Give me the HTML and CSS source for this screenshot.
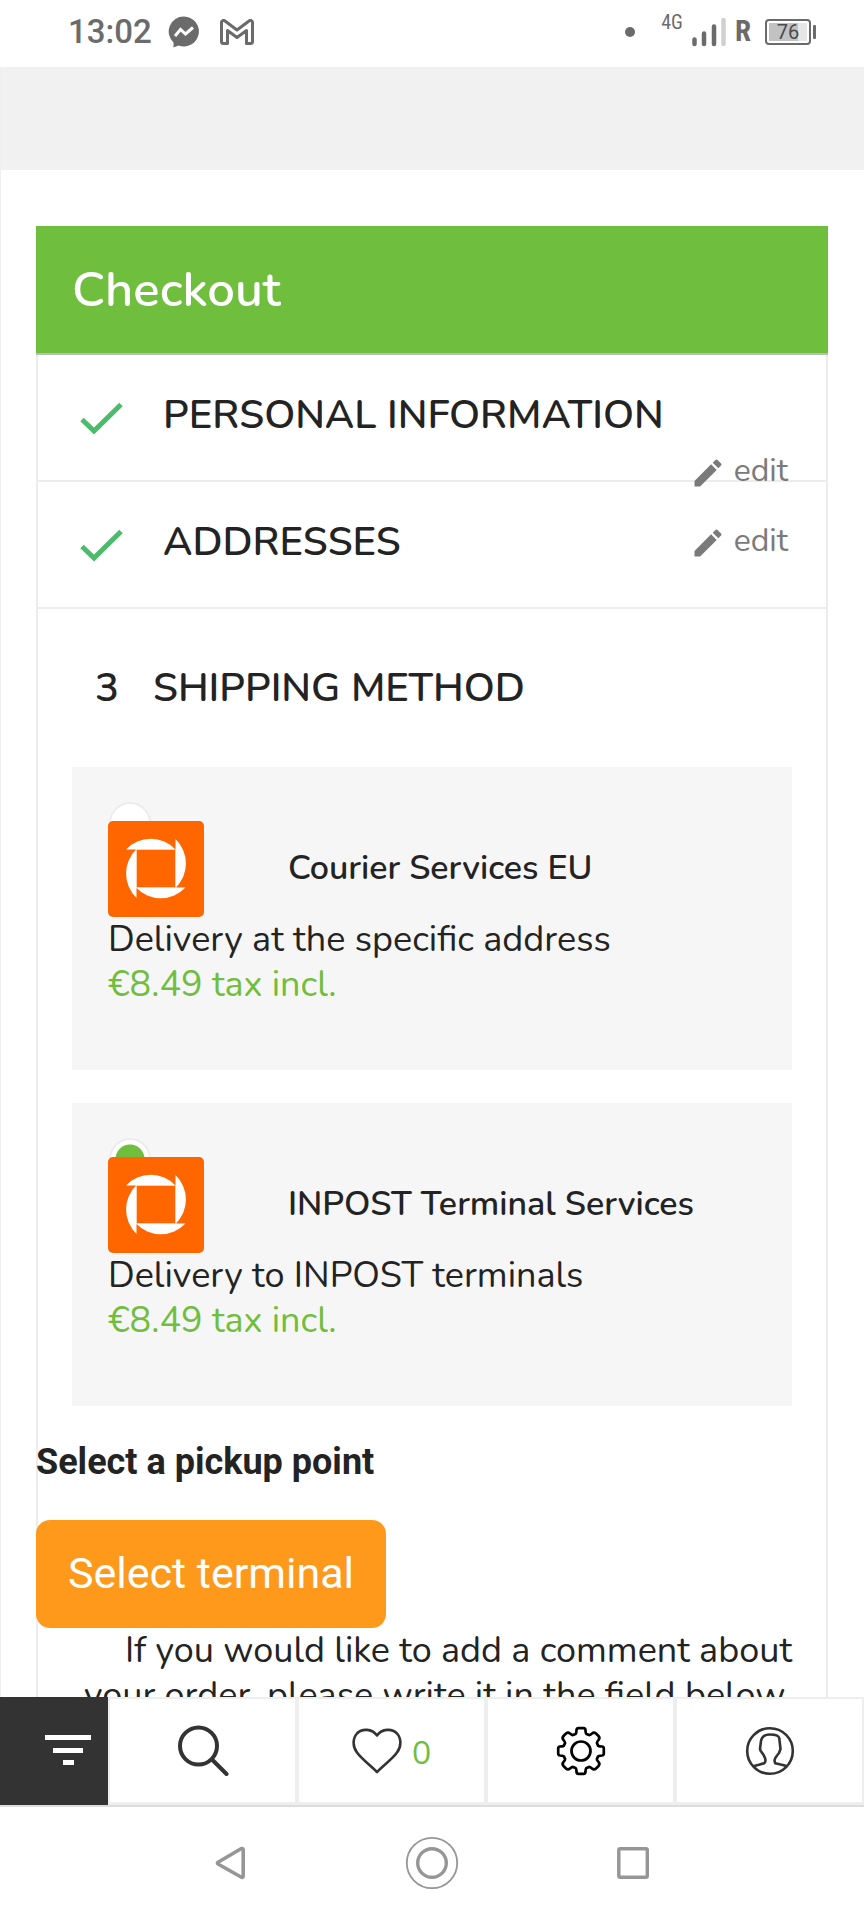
FILE: index.html
```html
<!DOCTYPE html>
<html lang="en">
<head>
<meta charset="utf-8">
<meta name="viewport" content="width=device-width, initial-scale=1">
<title>Checkout</title>
<link rel="stylesheet" href="styles.css">
</head>
<body>
<div class="screen">
  <header class="status">
    <time class="status-time">13:02</time>
    <svg class="status-icon" width="32" height="32" viewBox="0 0 32 32" aria-label="Messenger"><path fill="#6b6b6b" d="M16 0.500a15 15 0 1 1-5.500 29L5.500 31.500V26.500A15 15 0 0 1 16 .500Z"/><path fill="none" stroke="#fff" stroke-width="3" d="M7 20l5.500-6.500 5 4.500 7.500-6.500"/></svg>
    <svg class="status-icon mail" width="34" height="26" viewBox="0 0 34 26" aria-label="Mail"><path fill="none" stroke="#6b6b6b" stroke-width="3" stroke-linejoin="round" d="M1.500 3.500C1.500 1.500 3.500 .800 5 2L17 11 29 2c1.500-1.200 3.500-.500 3.500 1.500V22.500a2 2 0 0 1-2 2H26.500V11.500L17 18.500 7.500 11.500V24.500H3.500a2 2 0 0 1-2-2Z"/></svg>
    <span class="spacer"></span>
    <span class="dot"></span>
    <span class="net">4G</span>
    <svg class="signal" width="34" height="30" viewBox="0 0 34 30" aria-label="Signal"><g stroke="#6b6b6b" stroke-width="4.500" stroke-linecap="round"><path d="M2.500 22.500v4.500M12 16.500v10.500M22 9.500v17.500"/><path stroke="#d0d0d0" d="M31.500 3v24"/></g></svg>
    <span class="roam">R</span>
    <span class="battery"><span class="battery-level">76</span></span><span class="battery-tip"></span>
  </header>

  <main class="page">
    <div class="band"></div>
    <section class="checkout">
      <h1 class="checkout-title">Checkout</h1>
      <div class="checkout-body">
        <div class="step">
          <svg class="check" width="44" height="34" viewBox="0 0 44 34"><path fill="none" stroke="#4cbb6c" stroke-width="5" d="M2 17.500 14 29 41 2.500"/></svg>
          <h2 class="step-title">PERSONAL INFORMATION</h2>
          <a class="edit" href="#personal"><svg width="36" height="36" viewBox="0 0 24 24"><path fill="#7a7a7a" d="M3 17.250V21h3.750L17.810 9.940l-3.750-3.750L3 17.250zM20.710 7.040a1 1 0 0 0 0-1.410l-2.340-2.340a1 1 0 0 0-1.410 0l-1.830 1.830 3.750 3.750 1.830-1.830z"/></svg>edit</a>
        </div>
        <div class="step">
          <svg class="check" width="44" height="34" viewBox="0 0 44 34"><path fill="none" stroke="#4cbb6c" stroke-width="5" d="M2 17.500 14 29 41 2.500"/></svg>
          <h2 class="step-title">ADDRESSES</h2>
          <a class="edit" href="#addresses"><svg width="36" height="36" viewBox="0 0 24 24"><path fill="#7a7a7a" d="M3 17.250V21h3.750L17.810 9.940l-3.750-3.750L3 17.250zM20.710 7.040a1 1 0 0 0 0-1.410l-2.340-2.340a1 1 0 0 0-1.410 0l-1.830 1.830 3.750 3.750 1.830-1.830z"/></svg>edit</a>
        </div>
        <h2 class="shipping-title"><span class="step-number">3</span>SHIPPING METHOD</h2>

        <div class="options">
          <div class="option">
            <input class="radio" type="radio" name="shipping" id="courier">
            <label class="option-label" for="courier">
              <span class="option-head">
                <svg class="logo" width="96" height="96" viewBox="0 0 96 96"><rect width="96" height="96" rx="5" fill="#ff6600"/><path fill="#fff" d="M18 28.500A34 34 0 0 1 67.500 28.500ZM67.500 18A34 34 0 0 1 67.500 67ZM77.500 66.500A34 34 0 0 1 28 66.500ZM28.500 77A34 34 0 0 1 28.500 28Z"/><path fill="none" stroke="#ffd0b0" d="M28.500 28.500h39v38h-39z"/></svg>
                <span class="option-name">Courier Services EU</span>
              </span>
              <span class="option-text">Delivery at the specific address</span>
              <span class="option-price">€8.49 tax incl.</span>
            </label>
          </div>
          <div class="option">
            <input class="radio" type="radio" name="shipping" id="inpost" checked>
            <label class="option-label" for="inpost">
              <span class="option-head">
                <svg class="logo" width="96" height="96" viewBox="0 0 96 96"><rect width="96" height="96" rx="5" fill="#ff6600"/><path fill="#fff" d="M18 28.500A34 34 0 0 1 67.500 28.500ZM67.500 18A34 34 0 0 1 67.500 67ZM77.500 66.500A34 34 0 0 1 28 66.500ZM28.500 77A34 34 0 0 1 28.500 28Z"/><path fill="none" stroke="#ffd0b0" d="M28.500 28.500h39v38h-39z"/></svg>
                <span class="option-name">INPOST Terminal Services</span>
              </span>
              <span class="option-text">Delivery to INPOST terminals</span>
              <span class="option-price">€8.49 tax incl.</span>
            </label>
          </div>
        </div>

        <div class="pickup">
          <h3 class="pickup-title">Select a pickup point</h3>
          <button class="pickup-button" type="button">Select terminal</button>
        </div>
        <p class="comment">If you would like to add a comment about your order, please write it in the field below.</p>
      </div>
    </section>
  </main>

  <nav class="tabs">
    <button class="tab-menu" type="button" aria-label="Menu"><svg width="46" height="32" viewBox="0 0 46 32"><path fill="#fff" d="M0 0h46v5H0zM8 13h30v5H8zM18 25h11v5H18z"/></svg></button>
    <a class="tab" href="#search" aria-label="Search"><svg width="52" height="52" viewBox="0 0 52 52"><g fill="none" stroke="#333" stroke-width="4" stroke-linecap="round"><circle cx="21.500" cy="21" r="18.500"/><path d="M35 34.500 49.500 49"/></g></svg></a>
    <a class="tab" href="#wishlist" aria-label="Wishlist"><svg width="50" height="46" viewBox="0 0 50 46"><path fill="none" stroke="#333" stroke-width="2.600" stroke-linejoin="round" d="M25 7.500C30 .500 40 .200 45 5.500c4.500 5 4.500 13 0 19C40 31.500 31 37.500 25 44 19 37.500 10 31.500 5 24.500c-4.500-6-4.500-14 0-19C10 .200 20 .500 25 7.500Z"/></svg><span class="count">0</span></a>
    <a class="tab" href="#settings" aria-label="Settings"><svg width="50" height="50" viewBox="-25 -25 50 50"><g fill="none" stroke="#000" stroke-width="2.700" stroke-linejoin="round"><circle r="9.500"/><path d="M-5.500-17Q-4.600-17.500-4.500-21-4.300-22.800-2.500-22.800H2.500Q4.300-22.800 4.500-21 4.600-17.500 5.500-17L8.100-15.900Q9-15.800 11-17.500 13-19.300 15-17.500L17.500-15Q19.300-13 17.500-11 15.800-9 15.900-8.100L17-5.500Q17.500-4.600 21-4.500 22.800-4.300 22.800-2.500V2.500Q22.800 4.300 21 4.500 17.500 4.600 17 5.500L15.900 8.100Q15.800 9 17.500 11 19.300 13 17.500 15L15 17.500Q13 19.300 11 17.500 9 15.800 8.100 15.900L5.500 17Q4.600 17.500 4.500 21 4.300 22.800 2.500 22.800H-2.500Q-4.300 22.800-4.500 21-4.600 17.500-5.500 17L-8.100 15.900Q-9 15.800-11 17.500-13 19.300-15 17.500L-17.500 15Q-19.300 13-17.500 11-15.800 9-15.900 8.100L-17 5.500Q-17.500 4.600-21 4.500-22.800 4.300-22.800 2.500V-2.500Q-22.800-4.300-21-4.500-17.500-4.600-17-5.500L-15.900-8.100Q-15.800-9-17.500-11-19.300-13-17.500-15L-15-17.500Q-13-19.300-11-17.500-9-15.800-8.100-15.900Z"/></g></svg></a>
    <a class="tab" href="#account" aria-label="Account"><svg width="50" height="50" viewBox="-25 -25 50 50"><g fill="none" stroke="#333" stroke-width="2.600" stroke-linejoin="round"><circle r="22.800"/><path d="M-16 15C-13 13.800-9 13.500-6 12.300-2.500 10-6 4-9.300 0L-10-2-9-10C-8-15-4-16.500 0-16.500 4-16.500 9-16 9.300-12.500L10.500-2 9 2C5 7 3.500 9 5.300 12.300 9 13.500 13 13.800 16 15"/></g></svg></a>
  </nav>

  <nav class="system">
    <button class="system-button" type="button" aria-label="Back"><svg width="32" height="34" viewBox="0 0 32 34"><path fill="none" stroke="#969696" stroke-width="3.600" stroke-linejoin="round" d="M3 16.200 26 2.800Q28.200 2 28.200 4V30Q28.200 32 26 31L3 18Q2 17 3 16.200Z"/></svg></button>
    <button class="system-button" type="button" aria-label="Home"><svg width="54" height="54" viewBox="-27 -27 54 54"><g fill="none" stroke="#969696"><circle r="25.200" stroke-width="1.800"/><circle r="14.300" stroke-width="3.400"/></g></svg></button>
    <button class="system-button" type="button" aria-label="Recent apps"><svg width="32" height="32" viewBox="0 0 32 32"><rect x="1.800" y="1.800" width="28.500" height="28.500" rx="1.500" fill="none" stroke="#969696" stroke-width="3.400"/></svg></button>
  </nav>
</div>
</body>
</html>
```
FILE: styles.css
```css
* {
  box-sizing: border-box;
}

body {
  margin: 0;
  background: #fff;
  color: #232323;
  font-family: Nunito, Lato, sans-serif;
  font-size: 36px;
  line-height: 45px;
}

h1,
h2,
h3,
p {
  margin: 0;
}

button {
  padding: 0;
  border: 0;
  background: none;
  font: inherit;
}

a {
  color: inherit;
  text-decoration: none;
}

svg {
  display: block;
  flex: none;
}

.screen {
  display: flex;
  flex-direction: column;
  height: 100vh;
}

/* Device status bar */
.status {
  display: flex;
  flex: none;
  align-items: center;
  height: 67px;
  padding: 0 48px 4px 68px;
  color: #6b6b6b;
  font-family: Roboto, sans-serif;
}

.status-time {
  font-size: 33px;
  font-weight: 500;
}

.status-icon {
  margin-left: 16px;
}

.mail {
  margin-left: 20px;
}

.spacer {
  flex: 1;
}

.dot {
  width: 10px;
  height: 10px;
  margin-right: 26px;
  border-radius: 50%;
  background: #6b6b6b;
}

.net,
.roam {
  font-family: "Roboto Condensed", Roboto, sans-serif;
}

.net {
  align-self: flex-start;
  font-size: 20px;
}

.signal {
  margin: 0 9px;
}

.roam {
  margin-right: 14px;
  font-size: 29px;
  font-weight: 700;
}

.battery {
  width: 46px;
  height: 26px;
  padding: 2px;
  border: 2px solid #6b6b6b;
  border-radius: 4px;
}

.battery-level {
  display: block;
  height: 18px;
  background: linear-gradient(90deg, #c2c2c2 76%, #e6e6e6 76%);
  color: #4a4a4a;
  font-size: 20px;
  line-height: 18px;
  text-align: center;
}

.battery-tip {
  width: 3px;
  height: 14px;
  margin-left: 2px;
  border-radius: 1px;
  background: #6b6b6b;
}

/* Checkout page */
.page {
  flex: 1;
  min-height: 0;
  overflow: hidden;
  border-left: 1px solid #efefef;
}

.band {
  height: 103px;
  background: #f1f1f1;
}

.checkout {
  margin: 56px 36px 0 35px;
}

.checkout-title {
  padding: 32px 36px;
  border-bottom: 2px solid #bbb;
  background: #70be3d;
  color: #fff;
  font-size: 49px;
  font-weight: 600;
  line-height: 63px;
}

.checkout-body {
  border: 2px solid #ececec;
  border-top: 0;
}

.step {
  display: flex;
  flex-wrap: wrap;
  align-content: flex-start;
  align-items: flex-start;
  height: 127px;
  padding: 32px 38px 0 42px;
  border-bottom: 2px solid #ececec;
}

.check {
  margin: 15px 39px 0 0;
}

.step-title,
.shipping-title {
  font-size: 40px;
  font-weight: 600;
  line-height: 57px;
}

.step-title {
  padding-right: 36px;
}

.edit {
  display: flex;
  align-items: center;
  margin-left: auto;
  padding-top: 4px;
  color: #7a7a7a;
  font-size: 32px;
}

.edit svg {
  margin: 4px 8px 0 0;
}

.shipping-title {
  padding: 51px 36px 0 57px;
}

.step-number {
  padding-right: 34px;
}

.options {
  display: grid;
  gap: 33px;
  padding: 50px 34px 0;
}

.option {
  padding: 35px 36px 63px;
  background: #f6f6f6;
}

.radio {
  display: block;
  width: 42px;
  height: 42px;
  margin: 0 0 -23px 1px;
  appearance: none;
  border: 2px solid #ececec;
  border-radius: 50%;
  background: #fff;
}

.radio:checked {
  background: radial-gradient(circle, #70be3d 14px, #fff 15px);
}

.option-label {
  position: relative;
  display: block;
}

.option-head {
  display: flex;
  align-items: center;
  gap: 84px;
}

.option-name {
  padding-bottom: 2px;
  font-size: 34px;
  font-weight: 600;
}

.option-text,
.option-price {
  display: block;
}

.option-price {
  color: #70be3d;
}

.pickup {
  display: flex;
  flex-direction: column;
  align-items: flex-start;
  gap: 35px;
  margin: 34px 0 0 -2px;
  font-family: Roboto, sans-serif;
}

.pickup-title {
  font-size: 36px;
  font-weight: 700;
}

.pickup-button {
  height: 108px;
  padding: 0 32px 2px;
  border-radius: 14px;
  background: #ff991c;
  color: #fff;
  font-size: 43px;
}

.comment {
  padding: 0 34px;
  text-align: right;
}

/* Shop toolbar */
.tabs {
  display: flex;
  flex: none;
  height: 110px;
  border-bottom: 2px solid #ddd;
}

.tab-menu {
  display: flex;
  flex: 0 0 108px;
  align-items: center;
  justify-content: flex-end;
  padding-right: 17px;
  background: #333;
}

.tab {
  display: flex;
  flex: 1;
  align-items: center;
  justify-content: center;
  border: 2px solid #eee;
  border-bottom-width: 3px;
}

.count {
  padding: 6px 0 0 10px;
  color: #70be3d;
  font-size: 32px;
}

/* Device navigation */
.system {
  display: flex;
  flex: none;
  align-items: center;
  justify-content: center;
  gap: 158px;
  height: 113px;
  padding-bottom: 2px;
}

.system-button {
  display: flex;
}
```
